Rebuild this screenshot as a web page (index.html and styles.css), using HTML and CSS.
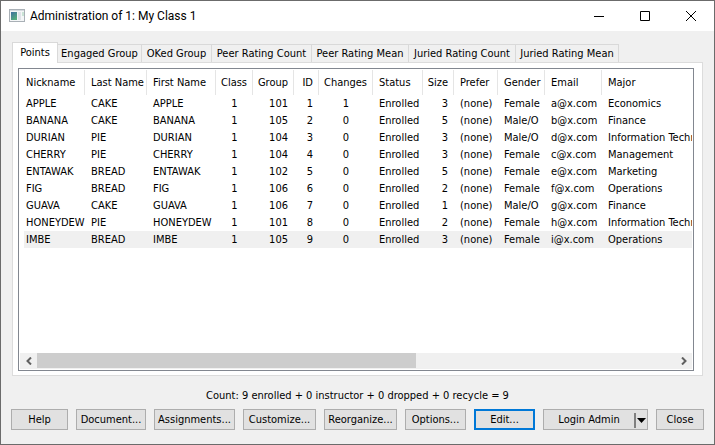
FILE: index.html
```html
<!DOCTYPE html>
<html lang="en">
<head>
    <meta charset="UTF-8">
    <meta name="viewport" content="width=device-width, initial-scale=1.0">
    <title>Administration of 1: My Class 1</title>
    <link rel="stylesheet" href="styles.css">
</head>
<body>

<div class="window">
    <header class="title-bar">
        <svg class="app-icon" width="16" height="14" viewBox="0 0 16 14" aria-hidden="true">
            <defs>
                <linearGradient id="iconFill" x1="0" y1="0" x2="0.6" y2="1">
                    <stop offset="0" stop-color="#3f6fa0"/>
                    <stop offset="1" stop-color="#56ad7c"/>
                </linearGradient>
            </defs>
            <rect x="0.5" y="0.5" width="15" height="12" fill="#f4f6f7" stroke="#a9b0b6"/>
            <rect x="1" y="1" width="14" height="1" fill="#d5dade"/>
            <rect x="2" y="3" width="6" height="8" fill="url(#iconFill)"/>
            <rect x="9" y="3" width="3" height="8" fill="#dfe3e8"/>
            <rect x="13" y="3" width="2" height="4" fill="#c9e3d5"/>
            <rect x="0" y="12" width="16" height="1" fill="#a9b0b6"/>
        </svg>
        <h1>Administration of 1: My Class 1</h1>
        <button class="window-btn" aria-label="Minimize">
            <svg width="10" height="10" viewBox="0 0 10 10"><path d="M0 5.5H10"/></svg>
        </button>
        <button class="window-btn" aria-label="Maximize">
            <svg width="10" height="10" viewBox="0 0 10 10"><path d="M0.5 0.5H9.5V9.5H0.5Z"/></svg>
        </button>
        <button class="window-btn" aria-label="Close window">
            <svg width="10" height="10" viewBox="0 0 10 10"><path d="M0 0L10 10M10 0L0 10"/></svg>
        </button>
    </header>

    <main class="content">
        <div class="tabs" role="tablist">
            <button class="tab active" role="tab" aria-selected="true">Points</button>
            <button class="tab" role="tab">Engaged Group</button>
            <button class="tab" role="tab">OKed Group</button>
            <button class="tab" role="tab">Peer Rating Count</button>
            <button class="tab" role="tab">Peer Rating Mean</button>
            <button class="tab" role="tab">Juried Rating Count</button>
            <button class="tab" role="tab">Juried Rating Mean</button>
        </div>

        <div class="tab-panel" role="tabpanel">
            <div class="list-box">
                <div class="table-wrap">
                    <table>
                        <colgroup>
                            <col class="col-nickname">
                            <col class="col-last">
                            <col class="col-first">
                            <col class="col-class">
                            <col class="col-group">
                            <col class="col-id">
                            <col class="col-changes">
                            <col class="col-status">
                            <col class="col-size">
                            <col class="col-prefer">
                            <col class="col-gender">
                            <col class="col-email">
                            <col class="col-major">
                        </colgroup>
                        <thead>
                            <tr>
                                <th>Nickname</th>
                                <th>Last Name</th>
                                <th>First Name</th>
                                <th class="center">Class</th>
                                <th class="right">Group</th>
                                <th class="right">ID</th>
                                <th class="center">Changes</th>
                                <th>Status</th>
                                <th class="right">Size</th>
                                <th>Prefer</th>
                                <th>Gender</th>
                                <th>Email</th>
                                <th>Major</th>
                            </tr>
                        </thead>
                        <tbody id="students"></tbody>
                    </table>
                </div>
                <div class="scrollbar">
                    <button class="scroll-btn" aria-label="Scroll left">
                        <svg width="6" height="8" viewBox="0 0 6 8"><path d="M5 0.5L1.5 4L5 7.5"/></svg>
                    </button>
                    <div class="scroll-track"><div class="scroll-thumb"></div></div>
                    <button class="scroll-btn" aria-label="Scroll right">
                        <svg width="6" height="8" viewBox="0 0 6 8"><path d="M1 0.5L4.5 4L1 7.5"/></svg>
                    </button>
                </div>
            </div>
        </div>

        <p class="count">Count: 9 enrolled + 0 instructor + 0 dropped + 0 recycle = 9</p>

        <div class="button-row">
            <button class="btn">Help</button>
            <button class="btn">Document...</button>
            <button class="btn">Assignments...</button>
            <button class="btn">Customize...</button>
            <button class="btn">Reorganize...</button>
            <button class="btn">Options...</button>
            <button class="btn default">Edit...</button>
            <button class="btn split">
                <span>Login Admin</span>
                <svg width="13" height="16" viewBox="0 0 13 16"><path d="M0 1H2V16H0Z" fill="#808080"/><path d="M3 6H12L7.5 11Z" fill="#000"/></svg>
            </button>
            <button class="btn">Close</button>
        </div>
    </main>
</div>

<script>
    const students = [
        ['APPLE', 'CAKE', 'APPLE', 1, 101, 1, 1, 'Enrolled', 3, '(none)', 'Female', 'a@x.com', 'Economics'],
        ['BANANA', 'CAKE', 'BANANA', 1, 105, 2, 0, 'Enrolled', 5, '(none)', 'Male/O', 'b@x.com', 'Finance'],
        ['DURIAN', 'PIE', 'DURIAN', 1, 104, 3, 0, 'Enrolled', 3, '(none)', 'Male/O', 'd@x.com', 'Information Technology'],
        ['CHERRY', 'PIE', 'CHERRY', 1, 104, 4, 0, 'Enrolled', 3, '(none)', 'Female', 'c@x.com', 'Management'],
        ['ENTAWAK', 'BREAD', 'ENTAWAK', 1, 102, 5, 0, 'Enrolled', 5, '(none)', 'Female', 'e@x.com', 'Marketing'],
        ['FIG', 'BREAD', 'FIG', 1, 106, 6, 0, 'Enrolled', 2, '(none)', 'Female', 'f@x.com', 'Operations'],
        ['GUAVA', 'CAKE', 'GUAVA', 1, 106, 7, 0, 'Enrolled', 1, '(none)', 'Male/O', 'g@x.com', 'Finance'],
        ['HONEYDEW', 'PIE', 'HONEYDEW', 1, 101, 8, 0, 'Enrolled', 2, '(none)', 'Female', 'h@x.com', 'Information Technology'],
        ['IMBE', 'BREAD', 'IMBE', 1, 105, 9, 0, 'Enrolled', 3, '(none)', 'Female', 'i@x.com', 'Operations']
    ];
    const selectedId = 9;

    // cells follow the alignment of their header
    const alignments = Array.from(document.querySelectorAll('th')).map(th => th.className);
    const tbody = document.getElementById('students');

    students.forEach(student => {
        const row = document.createElement('tr');
        if (student[5] === selectedId) {
            row.classList.add('selected');
        }
        student.forEach((value, index) => {
            const cell = document.createElement('td');
            cell.className = alignments[index];
            cell.textContent = value;
            row.appendChild(cell);
        });
        tbody.appendChild(row);
    });
</script>

</body>
</html>
```

FILE: styles.css
```css
* {
    box-sizing: border-box;
}

body {
    margin: 0;
    font-family: Tahoma, "DejaVu Sans Condensed", "Noto Sans", sans-serif;
    font-size: 11px;
    color: #000;
}

button {
    font: inherit;
    color: inherit;
    padding: 0;
    white-space: nowrap;
}

.window {
    display: flex;
    flex-direction: column;
    min-height: 100vh;
    border: 1px solid #6b6b6b;
    background-color: #f0f0f0;
}

.title-bar {
    display: flex;
    align-items: center;
    height: 30px;
    padding-left: 8px;
    background-color: #fff;
}

.title-bar h1 {
    flex: 1;
    margin: 0 0 0 5px;
    font-family: "Segoe UI", Roboto, sans-serif;
    font-size: 12px;
    font-weight: normal;
}

.window-btn {
    display: flex;
    align-items: center;
    justify-content: center;
    width: 46px;
    height: 28px;
    border: none;
    background: none;
}

.window-btn path {
    fill: none;
    stroke: #000;
}

.content {
    flex: 1;
    display: flex;
    flex-direction: column;
    padding: 11px 10px 14px;
}

.tabs {
    display: grid;
    grid-template-columns: 46px 84px 70px 100px 97px 107px 103px;
    align-items: end;
    height: 20px;
    padding-left: 1px;
}

.tab {
    height: 18px;
    border: 1px solid #d9d9d9;
    border-left: none;
    border-bottom: none;
    background-color: #f0f0f0;
}

.tab.active {
    position: relative;
    height: 21px;
    margin-bottom: -1px;
    padding-bottom: 2px;
    border-left: 1px solid #d9d9d9;
    background-color: #fff;
}

.tab-panel {
    flex: 1;
    display: flex;
    margin: 0 1px;
    padding: 5px 8px 4px 5px;
    border: 1px solid #dcdcdc;
    background-color: #fff;
}

.list-box {
    flex: 1;
    min-width: 0;
    display: flex;
    flex-direction: column;
    padding: 1px;
    border: 1px solid #828790;
}

.table-wrap {
    flex: 1;
    overflow: hidden;
    padding-left: 4px;
}

table {
    width: 100%;
    table-layout: fixed;
    border-collapse: separate;
    border-spacing: 0;
}

.col-nickname { width: 61px; }
.col-last { width: 62px; }
.col-first { width: 69px; }
.col-class { width: 37px; }
.col-group { width: 41px; }
.col-id { width: 25px; }
.col-changes { width: 54px; }
.col-status { width: 50px; }
.col-size { width: 31px; }
.col-prefer { width: 44px; }
.col-gender { width: 47px; }
.col-email { width: 57px; }

th,
td {
    height: 17px;
    padding: 0 0 0 6px;
    overflow: hidden;
    font-weight: normal;
    line-height: 17px;
    text-align: left;
    white-space: nowrap;
}

th {
    height: 25px;
    border-right: 1px solid #e5e5e5;
}

th:last-child {
    border-right: none;
}

th:first-child,
td:first-child {
    padding-left: 2px;
}

.center {
    padding: 0;
    text-align: center;
}

.right {
    padding: 0 6px 0 0;
    text-align: right;
}

th.right {
    padding-right: 5px;
}

.selected {
    background-color: #f0f0f0;
}

.scrollbar {
    display: flex;
    height: 16px;
    background-color: #f0f0f0;
}

.scroll-btn {
    display: flex;
    align-items: center;
    justify-content: center;
    width: 17px;
    border: none;
    background: none;
}

.scroll-btn path {
    fill: none;
    stroke: #606060;
    stroke-width: 2;
}

.scroll-track {
    flex: 1;
}

.scroll-thumb {
    width: 59.4%;
    height: 15px;
    background-color: #cdcdcd;
}

.count {
    margin: 12px 0 6px;
    line-height: 15px;
    text-align: center;
}

.button-row {
    display: grid;
    grid-template-columns: 57fr 70fr 81fr 73fr 73fr 61fr 61fr 105fr 48fr;
    gap: 8px;
}

.btn {
    height: 21px;
    border: 1px solid #adadad;
    background-color: #e1e1e1;
}

.btn.default {
    border: 2px solid #0078d7;
}

.btn.split {
    display: flex;
    align-items: center;
}

.btn.split span {
    flex: 1;
}
```
